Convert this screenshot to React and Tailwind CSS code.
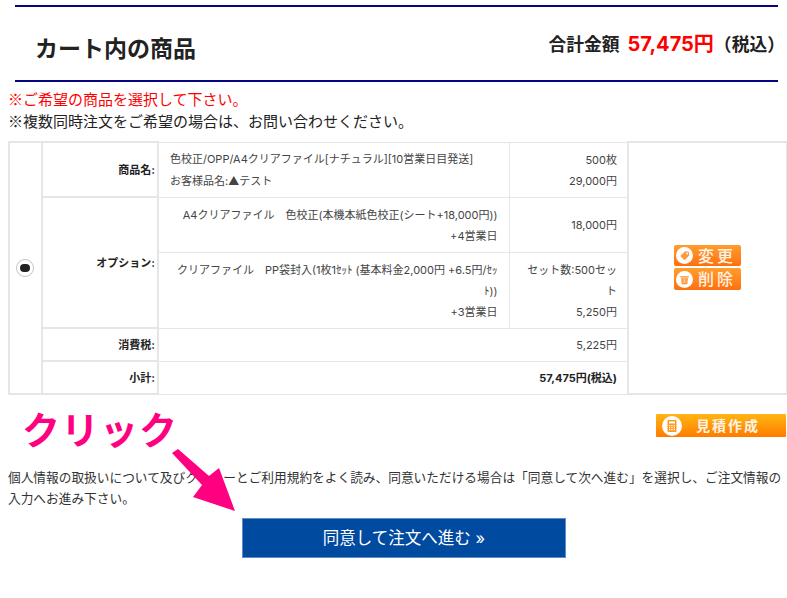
const FONT = "font-['Inter','Noto_Sans_CJK_JP',sans-serif]";

function TagIcon() {
  return (
    <svg viewBox="0 0 16 16" className="w-[17px] h-[17px] shrink-0">
      <circle cx="8" cy="8" r="8" fill="#fff" />
      <path d="M4 8.5 8.5 4l3.5.5.5 3.5L8 12.5Z" fill="#ff9a3c" />
      <circle cx="10.4" cy="6" r="0.9" fill="#fff" />
    </svg>
  );
}

function TrashIcon() {
  return (
    <svg viewBox="0 0 16 16" className="w-[17px] h-[17px] shrink-0">
      <circle cx="8" cy="8" r="8" fill="#fff" />
      <path d="M4 5h8v1.2H4ZM4.8 6.8h6.4L10.6 12.5H5.4Z" fill="#ff8a1e" />
      <path d="M6.6 7.6v4M8 7.6v4M9.4 7.6v4" stroke="#fff" strokeWidth="0.5" />
    </svg>
  );
}

function CalcIcon() {
  return (
    <svg viewBox="0 0 20 20" className="w-[20px] h-[20px] shrink-0">
      <circle cx="10" cy="10" r="10" fill="#fff" />
      <rect x="5.5" y="4" width="9" height="12" rx="1" fill="#ff9a1a" />
      <rect x="7" y="5.5" width="6" height="2" fill="#fff" />
      <path d="M7 9h1.3v1.3H7ZM9.3 9h1.3v1.3H9.3ZM11.7 9H13v1.3h-1.3ZM7 11h1.3v1.3H7ZM9.3 11h1.3v1.3H9.3ZM11.7 11H13v1.3h-1.3ZM7 13h1.3v1.3H7ZM9.3 13h1.3v1.3H9.3ZM11.7 13H13v1.3h-1.3Z" fill="#fff" />
    </svg>
  );
}

function SmallButton({ icon, label, className }) {
  return (
    <div className={`w-[67px] flex items-center pl-[2px] gap-[5px] rounded-[2px] bg-gradient-to-b from-[#ff9d2e] to-[#ff6f0c] text-[#fff3e6] text-[16px] leading-none font-medium tracking-[3px] whitespace-nowrap ${className}`}>
      {icon}
      <span>{label}</span>
    </div>
  );
}

const label = "border-2 border-[#e6e6e6] text-[11px] leading-[21px] text-[#222] font-bold text-right pt-[2px] pr-[2px] pl-0 align-middle";
const inner = "border border-[#e6e6e6] text-[11px] leading-[21px] text-[#444] text-right pt-[2px] pl-0 pr-[11px] align-middle";
const price = "border border-[#e6e6e6] text-[11px] leading-[21px] text-[#444] text-right pt-[2px] pl-0 pr-[10px] align-middle";

export default function App() {
  return (
    <div className={`relative w-[787px] h-[598px] bg-white overflow-hidden ${FONT}`}>
      <div className="pt-[5px] pl-[15px] pr-[9px]">
        <div className="h-[77px] border-y-2 border-[#05067f] flex items-center justify-between pl-[20px]">
          <h1 className="text-[23px] leading-none font-bold text-[#222] mt-[11px]">カート内の商品</h1>
          <div className="flex items-baseline text-[17.8px] font-bold text-[#222] leading-none mr-[-7px] whitespace-nowrap">
            <span>合計金額</span>
            <span className="text-[#ff0000] text-[20px] ml-[8px]">57,475円</span>
            <span>（税込）</span>
          </div>
        </div>
      </div>

      <div className="pl-[8px] pt-[6px] text-[15px] leading-[22px] whitespace-nowrap font-['Noto_Sans_CJK_JP',sans-serif]">
        <p className="text-[#ff0000]">※ご希望の商品を選択して下さい。</p>
        <p className="text-[#222]">※複数同時注文をご希望の場合は、お問い合わせください。</p>
      </div>

      <div className="pl-[8px] pt-[9px]">
        <table className="table-fixed border-collapse w-[778px]">
          <colgroup>
            <col className="w-[33px]" />
            <col className="w-[116px]" />
            <col className="w-[351px]" />
            <col className="w-[119px]" />
            <col className="w-[159px]" />
          </colgroup>
          <tbody>
            <tr className="h-[55px]">
              <td rowSpan={5} className="border-2 border-[#e6e6e6] align-middle">
                <div className="w-[18px] h-[18px] ml-[6px] rounded-full border border-[#c4c4c4] bg-white flex items-center justify-center">
                  <div className="w-[10px] h-[8px] rounded-[4px] bg-[#222]" />
                </div>
              </td>
              <td className={label}>商品名:</td>
              <td className={`${inner} !text-left !pl-[11px]`}>
                色校正/OPP/A4クリアファイル[ナチュラル][10営業日目発送]<br />お客様品名:<span className="font-['Noto_Sans_CJK_JP']">▲</span>テスト
              </td>
              <td className={price}>500枚<br />29,000円</td>
              <td rowSpan={5} className="border-2 border-[#e6e6e6] align-middle">
                <div className="flex flex-col items-center gap-[2px] mt-[-1px]">
                  <SmallButton icon={<TagIcon />} label="変更" className="h-[21px]" />
                  <SmallButton icon={<TrashIcon />} label="削除" className="h-[22px]" />
                </div>
              </td>
            </tr>
            <tr className="h-[55px]">
              <td rowSpan={2} className={label}>オプション:</td>
              <td className={inner}>A4クリアファイル　色校正(本機本紙色校正(シート+18,000円))<br />+4営業日</td>
              <td className={price}>18,000円</td>
            </tr>
            <tr className="h-[76px]">
              <td className={inner}>クリアファイル　PP袋封入(1枚1ｾｯﾄ (基本料金2,000円 +6.5円/ｾｯ<br />ﾄ))<br />+3営業日</td>
              <td className={price}>セット数:500セッ<br />ト<br />5,250円</td>
            </tr>
            <tr className="h-[33px]">
              <td className={label}>消費税:</td>
              <td colSpan={2} className={price}>5,225円</td>
            </tr>
            <tr className="h-[33px]">
              <td className={label}>小計:</td>
              <td colSpan={2} className={`${price} !font-bold !text-[#222]`}>57,475円(税込)</td>
            </tr>
          </tbody>
        </table>
      </div>

      <div className="flex justify-end pt-[19px] pr-[1px]">
        <div className="w-[130px] h-[23px] flex items-center pl-[6px] gap-[14px] rounded-[1px] bg-gradient-to-b from-[#ffb612] to-[#ff7a00] text-[#fff3e6] text-[14px] leading-none font-bold tracking-[2px] whitespace-nowrap">
          <CalcIcon />
          <span>見積作成</span>
        </div>
      </div>

      <p className="pt-[30px] pl-[8px] text-[12.7px] leading-[21px] text-[#333]">
        個人情報の取扱いについて及びクッキーとご利用規約をよく読み、同意いただける場合は「同意して次へ進む」を選択し、ご注文情報の入力へお進み下さい。
      </p>

      <div className="pt-[9px] pl-[242px]">
        <div className="w-[324px] h-[40px] bg-[#004a9f] border border-[#5e8cc4] flex items-center justify-center text-white text-[16.5px] whitespace-nowrap">
          同意して注文へ進む »
        </div>
      </div>

      <div className="absolute left-[22px] top-[406px] text-[38px] leading-[48px] font-bold text-[#ff0080] tracking-[1px] whitespace-nowrap">
        クリック
      </div>
      <svg className="absolute left-0 top-0 pointer-events-none" width="787" height="598" viewBox="0 0 787 598">
        <path d="M178 449 L209 476 L219 468 L235 511 L193 497 L202 485 L172 453 Z" fill="#ff0080" />
      </svg>
    </div>
  );
}
